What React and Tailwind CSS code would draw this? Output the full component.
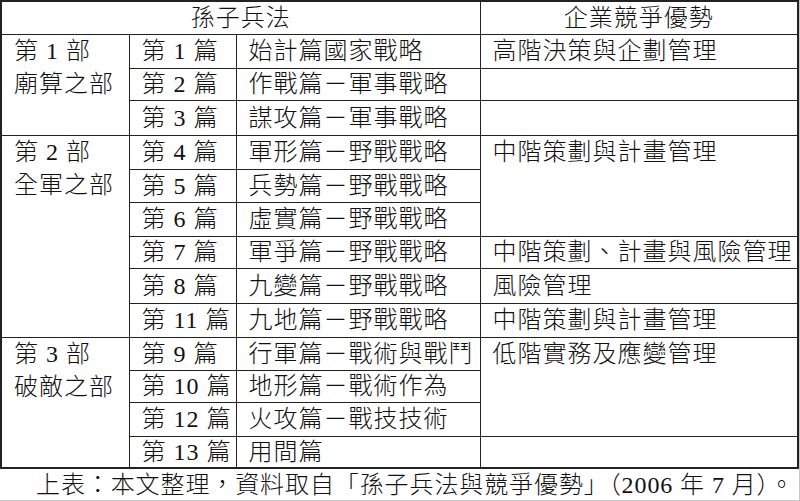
import React from 'react';

const font = { fontFamily: '"Liberation Serif", "Noto Sans CJK TC", serif' };

const parts = [
  { no: '第 1 部', name: '廟算之部', span: 3 },
  { no: '第 2 部', name: '全軍之部', span: 6 },
  { no: '第 3 部', name: '破敵之部', span: 4 },
];

// adv: text for column 4; span: rowspan; skip: covered by a rowspan above
const rows = [
  { h: 'h-[34px]', ch: '第 1 篇', title: '始計篇國家戰略', part: 0, adv: '高階決策與企劃管理', span: 1 },
  { h: 'h-[32px]', ch: '第 2 篇', title: '作戰篇－軍事戰略', adv: '', span: 1 },
  { h: 'h-[35px]', ch: '第 3 篇', title: '謀攻篇－軍事戰略', adv: '', span: 1 },
  { h: 'h-[34px]', ch: '第 4 篇', title: '軍形篇－野戰戰略', part: 1, adv: '中階策劃與計畫管理', span: 3 },
  { h: 'h-[33px]', ch: '第 5 篇', title: '兵勢篇－野戰戰略', skip: true },
  { h: 'h-[34px]', ch: '第 6 篇', title: '虛實篇－野戰戰略', skip: true },
  { h: 'h-[32px]', ch: '第 7 篇', title: '軍爭篇－野戰戰略', adv: '中階策劃、計畫與風險管理', span: 1 },
  { h: 'h-[35px]', ch: '第 8 篇', title: '九變篇－野戰戰略', adv: '風險管理', span: 1 },
  { h: 'h-[34px]', ch: '第 11 篇', title: '九地篇－野戰戰略', adv: '中階策劃與計畫管理', span: 1 },
  { h: 'h-[33px]', ch: '第 9 篇', title: '行軍篇－戰術與戰鬥', part: 2, adv: '低階實務及應變管理', span: 3 },
  { h: 'h-[32px]', ch: '第 10 篇', title: '地形篇－戰術作為', skip: true },
  { h: 'h-[34px]', ch: '第 12 篇', title: '火攻篇－戰技技術', skip: true },
  { h: 'h-[32px]', ch: '第 13 篇', title: '用間篇', adv: '', span: 1 },
];

const cell = 'border border-[#222] px-3 py-0 whitespace-pre';

export default function App() {
  return (
    <div
      className="w-[800px] h-[501px] bg-white text-[#111] text-[24px] font-light tracking-[1px] flex flex-col border-r border-b border-[#c8c8c8] overflow-hidden"
      style={font}
    >
      <table className="table-fixed border-collapse border-2 border-[#222] w-[798px] mt-0">
        <colgroup>
          <col className="w-[128px]" />
          <col className="w-[107px]" />
          <col className="w-[244px]" />
          <col className="w-[318px]" />
        </colgroup>
        <tbody>
          <tr className="h-[33px]">
            <td colSpan={3} className={`${cell} text-center leading-none`}>孫子兵法</td>
            <td className={`${cell} text-center leading-none`}>企業競爭優勢</td>
          </tr>
          {rows.map((r, i) => (
            <tr key={i} className={r.h}>
              {r.part !== undefined && (
                <td rowSpan={parts[r.part].span} className={`${cell} align-top leading-[33.5px]`}>
                  <div>{parts[r.part].no}</div>
                  <div>{parts[r.part].name}</div>
                </td>
              )}
              <td className={`${cell} leading-none`}>{r.ch}</td>
              <td className={`${cell} leading-none`}>{r.title}</td>
              {!r.skip && (
                <td
                  rowSpan={r.span}
                  className={`${cell} ${r.span > 1 ? 'align-top leading-[33.5px]' : 'leading-none'}`}
                >
                  {r.adv}
                </td>
              )}
            </tr>
          ))}
        </tbody>
      </table>
      <div className="flex-1 flex items-center pl-[36px] tracking-[0.9px] leading-none">
        上表：本文整理，資料取自「孫子兵法與競爭優勢」（2006 年 7 月）。
      </div>
    </div>
  );
}
